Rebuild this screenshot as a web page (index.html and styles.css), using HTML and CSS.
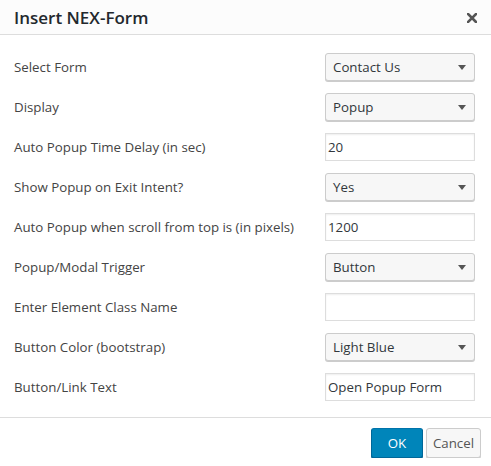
FILE: index.html
```html
<!DOCTYPE html>
<html lang="en">
<head>
  <meta charset="UTF-8">
  <title>Insert NEX-Form</title>
  <link rel="stylesheet" href="styles.css">
</head>
<body>
  <div class="modal">
    <div class="modal-header">
      <h1 class="modal-title">Insert NEX-Form</h1>
      <svg class="modal-close" width="10" height="10" viewBox="0 0 10 10">
        <path d="M1 1 L9 9 M9 1 L1 9" stroke="#555" stroke-width="2.6" stroke-linecap="square"/>
      </svg>
    </div>

    <div class="modal-body">
      <div class="form-row">
        <label>Select Form</label>
        <div class="select">Contact Us</div>
      </div>
      <div class="form-row">
        <label>Display</label>
        <div class="select">Popup</div>
      </div>
      <div class="form-row">
        <label>Auto Popup Time Delay (in sec)</label>
        <div class="text-input">20</div>
      </div>
      <div class="form-row">
        <label>Show Popup on Exit Intent?</label>
        <div class="select">Yes</div>
      </div>
      <div class="form-row">
        <label>Auto Popup when scroll from top is (in pixels)</label>
        <div class="text-input">1200</div>
      </div>
      <div class="form-row">
        <label>Popup/Modal Trigger</label>
        <div class="select">Button</div>
      </div>
      <div class="form-row">
        <label>Enter Element Class Name</label>
        <div class="text-input"></div>
      </div>
      <div class="form-row">
        <label>Button Color (bootstrap)</label>
        <div class="select">Light Blue</div>
      </div>
      <div class="form-row">
        <label>Button/Link Text</label>
        <div class="text-input">Open Popup Form</div>
      </div>
    </div>

    <div class="modal-footer">
      <button class="btn btn-primary">OK</button>
      <button class="btn btn-default">Cancel</button>
    </div>
  </div>
</body>
</html>
```

FILE: styles.css
```css
/* Page */
body {
  margin: 0;
  font-family: 'Open Sans', sans-serif;
  font-size: 13.3px;
  color: #444;
  background: #fff;
}

/* Modal Header */
.modal-header {
  display: flex;
  justify-content: space-between;
  align-items: center;
  height: 34px;
  padding: 0 14px;
  background: #fcfcfc;
  border-bottom: 1px solid #ddd;
}
.modal-title {
  margin: 0;
  font-size: 17px;
  font-weight: 600;
  color: #23282d;
}
.modal-close {
  display: block;
  margin-top: 1px;
}

/* Form Rows */
.modal-body {
  padding: 18px 16px 16px 14px;
  display: flex;
  flex-direction: column;
  gap: 12px;
}
.form-row {
  display: flex;
  justify-content: space-between;
  align-items: center;
  height: 28px;
}
.form-row label {
  color: #444;
}
.select,
.text-input {
  box-sizing: border-box;
  width: 150px;
  height: 28px;
  line-height: 26px;
  color: #32373c;
}
.select {
  position: relative;
  padding: 0 7px;
  background: #f7f7f7;
  border: 1px solid #ccc;
  border-radius: 3px;
  box-shadow: 0 1px 0 #ccc;
}
.select::after {
  content: "";
  position: absolute;
  right: 8px;
  top: 11px;
  border-left: 4px solid transparent;
  border-right: 4px solid transparent;
  border-top: 5px solid #555;
}
.text-input {
  padding: 0 2px;
  background: #fff;
  border: 1px solid #ddd;
  box-shadow: inset 0 1px 2px rgba(0, 0, 0, 0.07);
}

/* Footer */
.modal-footer {
  display: flex;
  justify-content: flex-end;
  gap: 3px;
  padding: 10px 10px 0;
  border-top: 1px solid #ddd;
}
.btn {
  height: 30px;
  padding: 0 10px;
  font-family: inherit;
  font-size: 13.3px;
  border-radius: 3px;
  border: 1px solid;
  cursor: pointer;
}
.btn-primary {
  width: 52px;
  color: #fff;
  background: #0085ba;
  border-color: #0073aa #006799 #006799;
  box-shadow: 0 1px 0 #006799;
}
.btn-default {
  width: 55px;
  padding: 0 4px;
  color: #555;
  background: #f7f7f7;
  border-color: #ccc;
  box-shadow: 0 1px 0 #ccc;
}
```
